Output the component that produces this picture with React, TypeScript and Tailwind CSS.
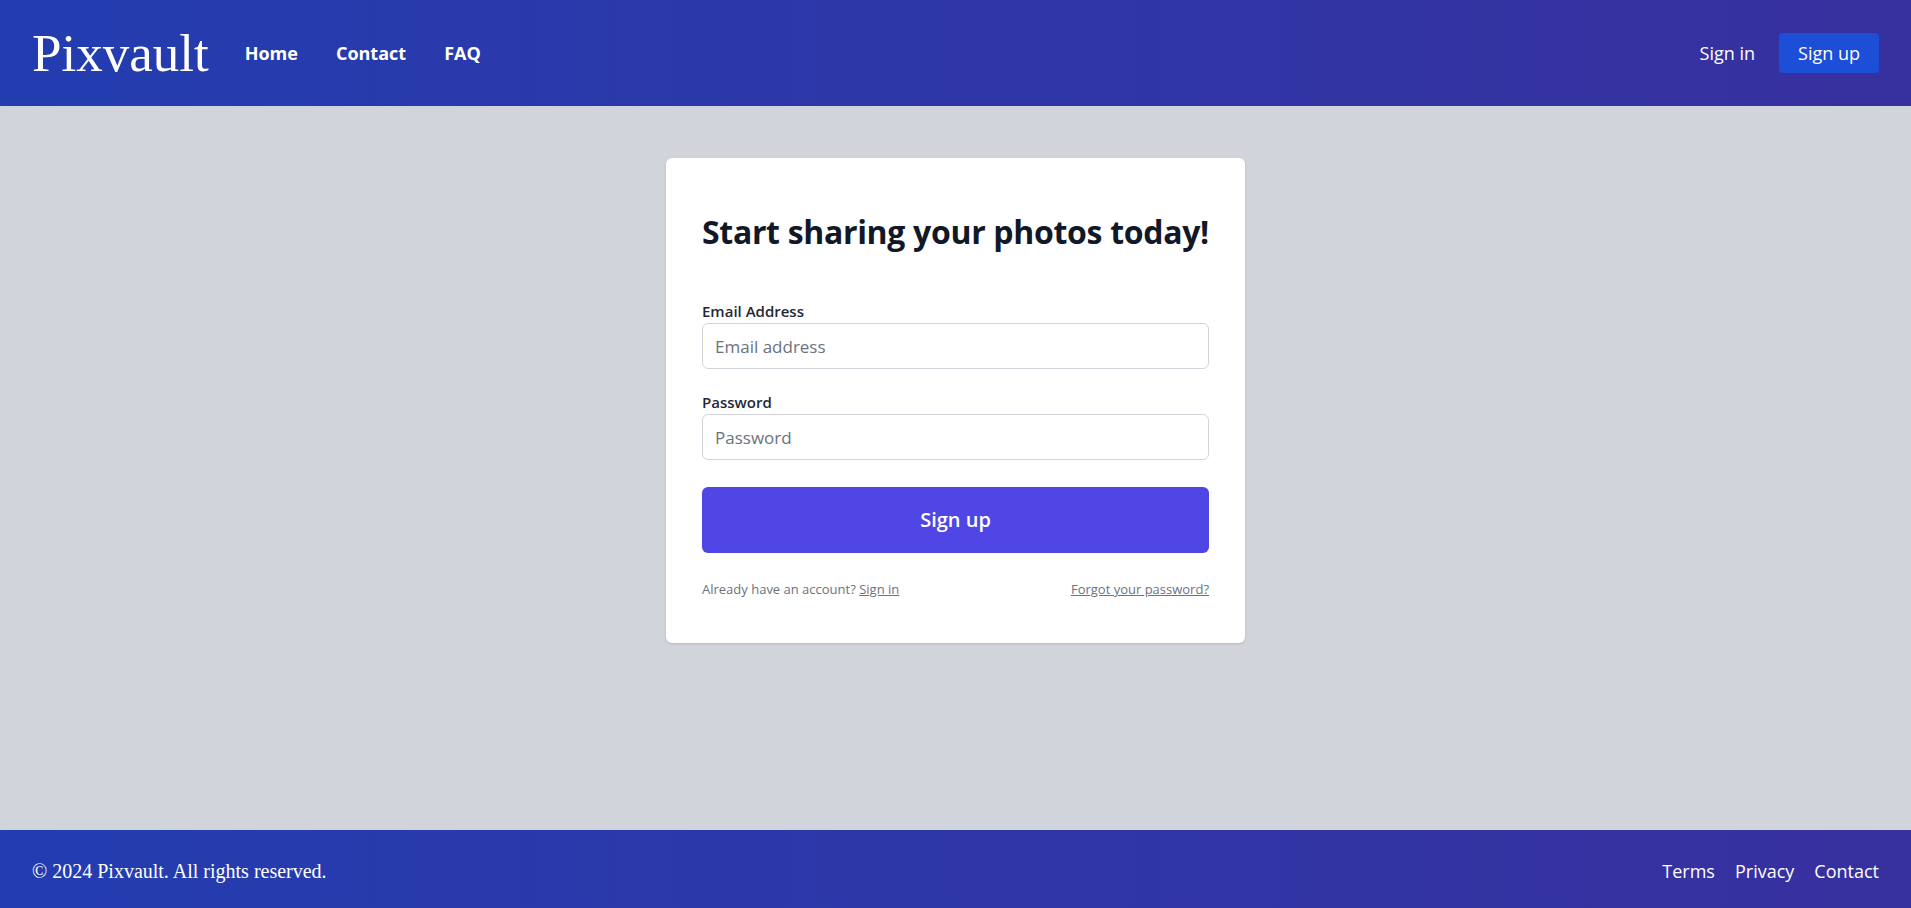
import React from 'react';

const SANS = "font-['Open_Sans',sans-serif]";

const Header: React.FC = () => {
  return (
    <header className="h-[106px] shrink-0 flex items-center justify-between px-8 bg-gradient-to-r from-[#223db0] to-[#37309f] text-white">
      <div className="flex items-center gap-9">
        {/* Logo */}
        <a href="#" className="font-['Liberation_Serif',serif] text-[53px] leading-none">
          Pixvault
        </a>
        <nav className={`flex items-center gap-[38px] text-lg font-bold ${SANS}`}>
          <a href="#">Home</a>
          <a href="#">Contact</a>
          <a href="#">FAQ</a>
        </nav>
      </div>
      <div className={`flex items-center gap-6 text-lg ${SANS}`}>
        <a href="#">Sign in</a>
        <a href="#" className="h-10 px-[19px] flex items-center rounded bg-[#1d4ed8]">
          Sign up
        </a>
      </div>
    </header>
  );
};

const Footer: React.FC = () => {
  return (
    <footer className="h-[78px] shrink-0 flex items-center justify-between px-8 pt-1 bg-gradient-to-r from-[#223db0] to-[#37309f] text-white">
      <p className="font-['Liberation_Serif',serif] text-xl">
        © 2024 Pixvault. All rights reserved.
      </p>
      <nav className={`flex items-center gap-5 text-lg ${SANS}`}>
        <a href="#">Terms</a>
        <a href="#">Privacy</a>
        <a href="#">Contact</a>
      </nav>
    </footer>
  );
};

const SignUpCard: React.FC = () => {
  return (
    <div className={`w-[579px] h-fit bg-white rounded-md shadow px-9 pt-[54px] pb-[44px] ${SANS}`}>
      <h1 className="text-[32px] leading-10 font-bold tracking-[-0.01em] whitespace-nowrap text-[#111827]">
        Start sharing your photos today!
      </h1>

      <form className="mt-[47px]" onSubmit={(e) => e.preventDefault()}>
        {/* Email */}
        <label htmlFor="email" className="block text-[15px] leading-6 font-semibold text-[#1f2937]">
          Email Address
        </label>
        <input
          id="email"
          type="email"
          placeholder="Email address"
          className="block w-full h-[46px] px-3 text-[17px] border border-[#d1d5db] rounded-md placeholder:text-[#6b7280] outline-none"
        />

        {/* Password */}
        <label htmlFor="password" className="block mt-[21px] text-[15px] leading-6 font-semibold text-[#1f2937]">
          Password
        </label>
        <input
          id="password"
          type="password"
          placeholder="Password"
          className="block w-full h-[46px] px-3 text-[17px] border border-[#d1d5db] rounded-md placeholder:text-[#6b7280] outline-none"
        />

        <button
          type="submit"
          className="mt-[27px] w-full h-[66px] rounded-md bg-[#4f46e5] text-white text-xl font-semibold"
        >
          Sign up
        </button>

        <div className="mt-[26px] flex items-center justify-between text-[13px] leading-5 text-[#6b7280]">
          <p>
            Already have an account?{' '}
            <a href="#" className="underline">Sign in</a>
          </p>
          <a href="#" className="underline">Forgot your password?</a>
        </div>
      </form>
    </div>
  );
};

export default function App() {
  return (
    <div className="min-h-screen h-[908px] flex flex-col">
      <Header />
      <main className="flex-1 bg-[#d1d5db] flex justify-center pt-[52px]">
        <SignUpCard />
      </main>
      <Footer />
    </div>
  );
}
